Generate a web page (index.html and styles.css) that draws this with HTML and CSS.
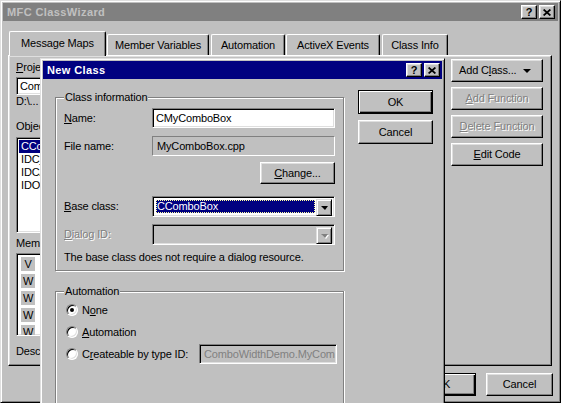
FILE: index.html
```html
<!DOCTYPE html>
<html>
<head>
<meta charset="utf-8">
<title>MFC ClassWizard</title>
<link rel="stylesheet" href="styles.css">
</head>
<body>
<div class="win main">
  <div class="titlebar inactive">
    <span class="title">MFC ClassWizard</span>
    <div class="tbtns">
      <span class="tbtn q">?</span>
      <span class="tbtn x"><svg width="8" height="7" viewBox="0 0 8 7"><path d="M0.6 0.5L7.4 6.5M7.4 0.5L0.6 6.5" stroke="#000" stroke-width="1.7" fill="none"/></svg></span>
    </div>
  </div>
  <div class="client">
    <div class="tabs">
      <div class="tab sel t1">Message Maps</div>
      <div class="tab t2">Member Variables</div>
      <div class="tab t3">Automation</div>
      <div class="tab t4">ActiveX Events</div>
      <div class="tab t5">Class Info</div>
    </div>
    <div class="panel">
      <div class="pleft">
        <div class="lbl l-proj"><u>P</u>roje</div>
        <div class="field proj">Com</div>
        <div class="lbl l-path">D:\...</div>
        <div class="lbl l-obj">Objec</div>
        <div class="list l1">
          <div class="item sel">CCo</div>
          <div class="item">IDC_</div>
          <div class="item">IDCA</div>
          <div class="item">IDOI</div>
        </div>
        <div class="lbl l-mem">Meml</div>
        <div class="list l2">
          <div class="item2"><span class="glyph">V</span></div>
          <div class="item2"><span class="glyph">W</span></div>
          <div class="item2"><span class="glyph">W</span></div>
          <div class="item2"><span class="glyph">W</span></div>
          <div class="item2"><span class="glyph">W</span></div>
        </div>
        <div class="lbl l-desc">Desc</div>
      </div>
      <div class="pright">
        <div class="btn addclass"><span>Add C<u>l</u>ass...</span><span class="arrow"></span></div>
        <div class="btn dis"><span><u>A</u>dd Function</span></div>
        <div class="btn dis"><span><u>D</u>elete Function</span></div>
        <div class="btn"><span><u>E</u>dit Code</span></div>
      </div>
    </div>
    <div class="bottom">
      <div class="btn def wide">OK</div>
      <div class="btn wide">Cancel</div>
    </div>
  </div>
</div>

<div class="win dlg">
  <div class="titlebar active">
    <span class="title">New Class</span>
    <div class="tbtns">
      <span class="tbtn q">?</span>
      <span class="tbtn x"><svg width="8" height="7" viewBox="0 0 8 7"><path d="M0.6 0.5L7.4 6.5M7.4 0.5L0.6 6.5" stroke="#000" stroke-width="1.7" fill="none"/></svg></span>
    </div>
  </div>
  <div class="dbody">
    <div class="dleft">
      <div class="group g1">
        <div class="glabel">Class information</div>
        <div class="row r-name">
          <div class="rl"><u>N</u>ame:</div>
          <div class="field edit">CMyComboBox</div>
        </div>
        <div class="row r-file">
          <div class="rl">File name:</div>
          <div class="field static">MyComboBox.cpp</div>
        </div>
        <div class="row r-change">
          <div class="btn change"><span><u>C</u>hange...</span></div>
        </div>
        <div class="row r-base">
          <div class="rl"><u>B</u>ase class:</div>
          <div class="combo">
            <div class="ctext"><span>CComboBox</span></div>
            <div class="dd"><span class="arrow"></span></div>
          </div>
        </div>
        <div class="row r-dlg">
          <div class="rl distext"><u>D</u>ialog ID:</div>
          <div class="combo off">
            <div class="ctext"></div>
            <div class="dd"><span class="arrow disarrow"></span></div>
          </div>
        </div>
        <div class="note">The base class does not require a dialog resource.</div>
      </div>
      <div class="group g2">
        <div class="glabel">Automation</div>
        <div class="rrow r1"><span class="radio on"></span><span>N<u>o</u>ne</span></div>
        <div class="rrow r2"><span class="radio"></span><span><u>A</u>utomation</span></div>
        <div class="rrow r3"><span class="radio"></span><span>C<u>r</u>eateable by type ID:</span><div class="field typeid">ComboWidthDemo.MyCom</div></div>
      </div>
    </div>
    <div class="dright">
      <div class="btn def dbtn">OK</div>
      <div class="btn dbtn">Cancel</div>
    </div>
  </div>
</div>
</body>
</html>
```

FILE: styles.css
```css
* { box-sizing: border-box; }
html, body { margin: 0; padding: 0; }
body {
  width: 561px; height: 403px; overflow: hidden; position: relative;
  background: #c0c0c0; color: #000;
  font-family: "Liberation Sans", Arial, sans-serif; font-size: 11px; line-height: 13px;
  letter-spacing: -0.15px;
}
u { text-decoration: underline; text-underline-offset: 1px; text-decoration-thickness: 1px; }

.win {
  background: #c0c0c0;
  border: 1px solid; border-color: #dfdfdf #000 #000 #dfdfdf;
  box-shadow: inset 1px 1px #fff, inset -1px -1px #808080;
  padding: 2px;
}
.main { width: 561px; height: 403px; }

.titlebar { height: 18px; display: flex; align-items: center; font-weight: bold; font-size: 11px; }
.inactive { background: #808080; color: #c0c0c0; padding: 0 3px 0 2px; }
.active { background: #000080; color: #fff; padding: 0 2px 0 2px; }
.title { flex: 1; padding-left: 2px; letter-spacing: 0.4px; }
.tbtns { display: flex; gap: 2px; }
.tbtn {
  width: 16px; height: 14px; background: #c0c0c0; color: #000;
  border: 1px solid; border-color: #fff #000 #000 #fff;
  box-shadow: inset -1px -1px #808080, inset 1px 1px #dfdfdf;
  display: flex; align-items: center; justify-content: center;
  font-size: 11px; font-weight: bold; line-height: 12px; letter-spacing: 0;
}
.tbtn svg { display: block; margin-top: 1px; }

.client { padding: 10px 0 0 5px; }
.tabs { display: flex; align-items: flex-end; height: 24px; position: relative; z-index: 1; padding-left: 1px; }
.tab {
  height: 21px; background: #c0c0c0;
  border-top: 1px solid #fff; border-left: 1px solid #fff; border-right: 1px solid #000;
  border-top-left-radius: 2px; border-top-right-radius: 2px;
  box-shadow: inset -1px 0 #808080;
  display: flex; align-items: center; justify-content: center;
  margin-left: 1px;
}
.tab.sel { height: 25px; margin-bottom: -1px; padding-bottom: 2px; margin-left: 0; }
.t1 { width: 97px; }
.t2 { width: 102px; }
.t3 { width: 74px; margin-left: 2px; }
.t4 { width: 94px; }
.t5 { width: 66px; margin-left: 2px; }

.panel {
  width: 544px; height: 311px;
  border: 1px solid; border-color: #fff #000 #000 #fff;
  box-shadow: inset -1px -1px #808080, inset 1px 1px #dfdfdf;
  display: flex; padding: 3px 8px 0 7px;
}
.pleft { width: 40px; display: flex; flex-direction: column; }
.lbl { height: 13px; white-space: nowrap; }
.l-proj { margin-top: 2px; }
.l-path { margin-top: 0; }
.l-obj { margin-top: 12px; }
.l-mem { margin-top: 4px; }
.l-desc { margin-top: 9px; }

.field {
  border: 1px solid; border-color: #808080 #fff #fff #808080;
  box-shadow: inset 1px 1px #000, inset -1px -1px #dfdfdf;
  background: #fff; white-space: nowrap; overflow: hidden;
  display: flex; align-items: center; padding-left: 3px;
}
.proj { margin-top: 3px; height: 18px; width: 40px; }

.list {
  border: 1px solid; border-color: #808080 #fff #fff #808080;
  box-shadow: inset 1px 1px #000, inset -1px -1px #dfdfdf;
  background: #fff; padding: 2px; overflow: hidden; width: 40px;
}
.l1 { margin-top: 4px; height: 96px; padding-right: 0; }
.l2 { margin-top: 3px; height: 83px; }
.item { height: 13px; padding-left: 2px; white-space: nowrap; }
.item.sel { background: #000080; color: #fff; }
.item2 { height: 17px; padding-left: 2px; }
.glyph {
  display: inline-flex; width: 14px; height: 14px; background: #c0c0c0;
  align-items: center; justify-content: center; margin-top: 1px;
}

.pright { margin-left: auto; width: 92px; display: flex; flex-direction: column; gap: 5px; }

.btn {
  height: 23px; background: #c0c0c0;
  border: 1px solid; border-color: #fff #000 #000 #fff;
  box-shadow: inset -1px -1px #808080, inset 1px 1px #dfdfdf;
  display: flex; align-items: center; justify-content: center; white-space: nowrap;
}
.btn.def {
  border-color: #000;
  box-shadow: inset 1px 1px #fff, inset -1px -1px #000, inset -2px -2px #808080;
}
.btn.dis { color: #808080; text-shadow: 1px 1px #fff; }
.addclass { justify-content: space-between; padding: 0 11px 0 7px; }
.arrow {
  width: 0; height: 0; border-left: 4px solid transparent; border-right: 4px solid transparent;
  border-top: 4px solid #000; display: block;
}
.disarrow { border-top-color: #808080; filter: drop-shadow(1px 1px 0 #fff); }

.bottom { display: flex; justify-content: flex-end; gap: 10px; width: 545px; margin-top: 7px; }
.wide { width: 67px; }

/* New Class dialog */
.dlg {
  position: absolute; left: 40px; top: 58px; width: 405px; height: 345px;
  border-bottom: 0; overflow: hidden;
  box-shadow: inset 1px 1px #fff, inset -1px 0 #808080;
}
.dbody { display: flex; padding: 11px 0 0 12px; }
.dleft { width: 289px; padding-top: 7px; }
.dright { margin-left: 14px; width: 75px; display: flex; flex-direction: column; gap: 6px; }
.dbtn { height: 24px; }

.group {
  position: relative; width: 289px;
  border: 1px solid #808080;
  box-shadow: inset 1px 1px #fff, 1px 1px #fff;
}
.glabel { position: absolute; top: -7px; left: 8px; padding: 0 1px; background: #c0c0c0; height: 13px; }
.g1 { padding: 10px 8px 6px 8px; }
.g2 {
  margin-top: 20px; height: 112px; padding: 10px 6px 0 10px;
  border-bottom: 0; box-shadow: inset 1px 1px #fff, 1px 0 #fff;
}

.row { display: flex; align-items: center; }
.rl { width: 88px; white-space: nowrap; }
.row .field, .row .combo { width: 183px; }
.r-name { height: 20px; }
.r-name .field { height: 20px; }
.r-file { height: 20px; margin-top: 8px; }
.static { height: 20px; background: #c0c0c0; box-shadow: none; padding-left: 4px; }
.r-change { height: 22px; margin-top: 6px; justify-content: flex-end; }
.change { width: 75px; height: 22px; }
.r-base { height: 21px; margin-top: 12px; }
.r-dlg { height: 21px; margin-top: 7px; }
.distext { color: #808080; text-shadow: 1px 1px #fff; }
.note { margin-top: 6px; height: 13px; white-space: nowrap; }

.combo {
  height: 21px; background: #fff; display: flex; padding: 2px;
  border: 1px solid; border-color: #808080 #fff #fff #808080;
  box-shadow: inset 1px 1px #000, inset -1px -1px #dfdfdf;
}
.combo.off { background: #c0c0c0; }
.ctext { flex: 1; display: flex; padding: 1px; }
.r-base .ctext span {
  flex: 1; background: #000080; color: #fff; padding-left: 1px;
  outline: 1px dotted #ffffa0; outline-offset: -1px;
  display: flex; align-items: center;
}
.dd {
  width: 16px; height: 17px; background: #c0c0c0;
  border: 1px solid; border-color: #dfdfdf #000 #000 #dfdfdf;
  box-shadow: inset 1px 1px #fff, inset -1px -1px #808080;
  display: flex; align-items: center; justify-content: center;
}
.dd .arrow { border-left-width: 4px; border-right-width: 3px; border-top-width: 4px; }

.rrow { display: flex; align-items: center; white-space: nowrap; }
.r1 { height: 16px; }
.r2 { height: 16px; margin-top: 6px; }
.r3 { height: 20px; margin-top: 4px; }
.radio {
  width: 12px; height: 12px; border-radius: 50%; background: #fff; margin-right: 4px; flex: none;
  border: 1px solid; border-color: #808080 #fff #fff #808080;
  box-shadow: inset 1px 1px #000, inset -1px -1px #dfdfdf;
  display: flex; align-items: center; justify-content: center;
}
.radio.on::after { content: ""; width: 4px; height: 4px; border-radius: 50%; background: #000; }
.typeid { margin-left: auto; width: 138px; height: 20px; background: #c0c0c0; color: #808080; padding-left: 4px; }
```
